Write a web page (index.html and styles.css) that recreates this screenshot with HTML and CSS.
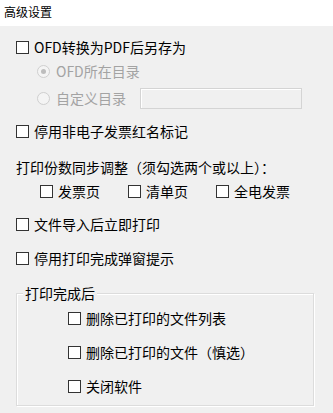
FILE: index.html
```html
<!DOCTYPE html>
<html lang="zh">
<head>
<meta charset="utf-8">
<link rel="stylesheet" href="styles.css">
</head>
<body>
<div class="header">高级设置</div>
<div class="content">
  <div class="row r1"><span class="cb"></span><span>OFD转换为PDF后另存为</span></div>
  <div class="row sub r2"><span class="radio checked"></span><span>OFD所在目录</span></div>
  <div class="row sub r3"><span class="radio"></span><span class="dirlabel">自定义目录</span><span class="textbox"></span></div>
  <div class="row r4"><span class="cb"></span><span>停用非电子发票红名标记</span></div>
  <div class="row label r5">打印份数同步调整（须勾选两个或以上）：</div>
  <div class="row opts r6">
    <div class="opt"><span class="cb"></span><span>发票页</span></div>
    <div class="opt"><span class="cb"></span><span>清单页</span></div>
    <div class="opt"><span class="cb"></span><span>全电发票</span></div>
  </div>
  <div class="row r7"><span class="cb"></span><span>文件导入后立即打印</span></div>
  <div class="row r8"><span class="cb"></span><span>停用打印完成弹窗提示</span></div>
  <div class="group">
    <div class="legend">打印完成后</div>
    <div class="grow"><span class="cb"></span><span>删除已打印的文件列表</span></div>
    <div class="grow"><span class="cb"></span><span>删除已打印的文件（慎选）</span></div>
    <div class="grow"><span class="cb"></span><span>关闭软件</span></div>
  </div>
</div>
</body>
</html>
```
FILE: styles.css
```css
html, body {
  margin: 0;
  padding: 0;
}
body {
  width: 333px;
  height: 413px;
  overflow: hidden;
  background: #f0f0f0;
  font-family: "Noto Sans CJK SC", "Microsoft YaHei", sans-serif;
  font-size: 14px;
  color: #000;
}
.header {
  height: 26px;
  background: #fff;
  font-size: 12px;
  line-height: 24px;
  padding-left: 4px;
}
.content {
  padding-left: 16px;
  display: flex;
  flex-direction: column;
}
.row {
  display: flex;
  align-items: center;
  height: 20px;
  line-height: 20px;
}
.cb {
  width: 11px;
  height: 11px;
  border: 1px solid #333;
  background: #fff;
  margin-right: 5px;
  flex: none;
}
.radio {
  width: 11px;
  height: 11px;
  border: 1px solid #cfcfcf;
  border-radius: 50%;
  background: #f4f4f4;
  margin-right: 6px;
  flex: none;
  display: flex;
  align-items: center;
  justify-content: center;
}
.radio.checked::after {
  content: "";
  width: 5px;
  height: 5px;
  border-radius: 50%;
  background: #bdbdbd;
}
.sub {
  padding-left: 21px;
  color: #a3a3a3;
}
.r1 { margin-top: 11px; }
.r2 { margin-top: 4px; }
.r3 { margin-top: 6px; height: 22px; }
.dirlabel { width: 84px; }
.textbox {
  width: 160px;
  height: 19px;
  border: 1px solid #d4d4d4;
  background: #f0f0f0;
  box-shadow: inset 1px 1px 0 #fff;
}
.r4 { margin-top: 12px; }
.r5 { margin-top: 16px; }
.r6 { margin-top: 4px; padding-left: 24px; }
.opt {
  display: flex;
  align-items: center;
  width: 88px;
}
.r7 { margin-top: 13px; }
.r8 { margin-top: 14px; }
.group {
  margin-top: 25px;
  width: 296px;
  height: 97px;
  border: 1px solid #dcdcdc;
  box-shadow: inset 1px 1px 0 #fff, 1px 1px 0 #fff;
  position: relative;
  padding-top: 14px;
  box-sizing: content-box;
  display: flex;
  flex-direction: column;
  gap: 14px;
}
.legend {
  position: absolute;
  left: 6px;
  top: -11px;
  padding: 0 2px;
  background: #f0f0f0;
  line-height: 20px;
}
.grow {
  display: flex;
  align-items: center;
  height: 20px;
  padding-left: 51px;
}
```
